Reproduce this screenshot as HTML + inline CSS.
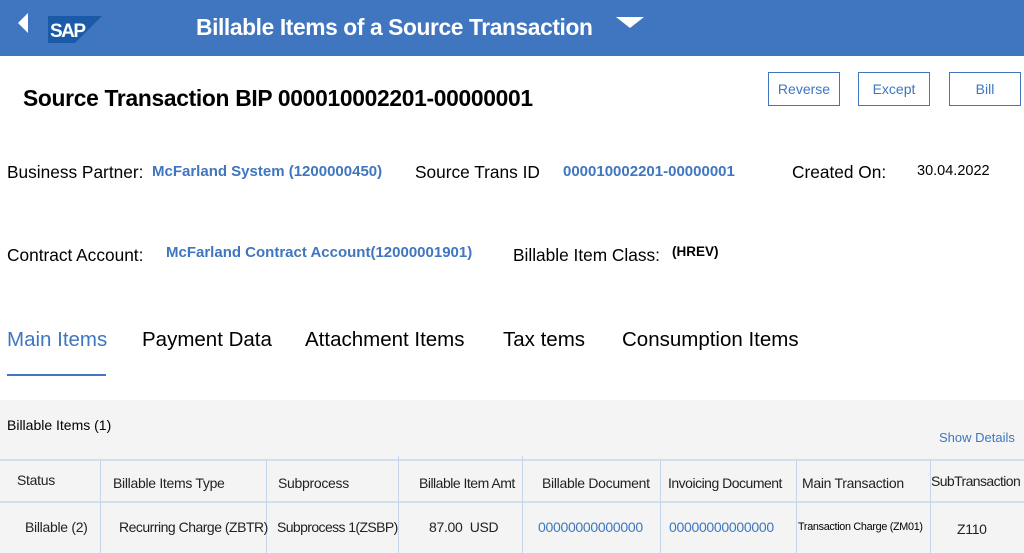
<!DOCTYPE html>
<html><head><style>
body{margin:0;width:1024px;height:553px;overflow:hidden;background:#fff;font-family:"Liberation Sans",sans-serif;position:relative}
.a{position:absolute;white-space:nowrap}
.hdr{position:absolute;left:0;top:0;width:1024px;height:56px;background:#3f76bf}
.btn{position:absolute;top:72px;height:34px;border:1px solid #3f76bf;color:#3f76bf;font-size:14px;text-align:center;line-height:33px;box-sizing:border-box}
.lnk{color:#3f76bf;font-weight:bold}
.gray{position:absolute;left:0;top:400px;width:1024px;height:153px;background:#f4f4f4}
.vl{position:absolute;width:1px;background:#c5d6ea}
.hl{position:absolute;height:2px;background:#d2dfee}
.th{font-size:14px;color:#222;letter-spacing:-0.3px}
</style></head><body>
<div class="hdr"></div>
<svg class="a" style="left:18px;top:13px" width="12" height="20"><polygon points="10,0 10,20 0,10" fill="#fff"/></svg>
<svg class="a" style="left:48px;top:16px" width="54" height="27"><polygon points="0,0 54,0 27,27 0,27" fill="#1a5aa8"/><text x="2" y="21" font-family="Liberation Sans" font-weight="bold" font-size="19" fill="#fff" letter-spacing="-1.5">SAP</text></svg>
<div class="a" style="left:196px;top:14px;color:#fff;font-size:22.8px;font-weight:bold;letter-spacing:-0.4px">Billable Items of a Source Transaction</div>
<svg class="a" style="left:616px;top:17px" width="28" height="12"><polygon points="0,0 28,0 14,11" fill="#fff"/></svg>
<div class="a" style="left:23px;top:85px;font-size:22.8px;font-weight:bold;letter-spacing:-0.3px">Source Transaction BIP 000010002201-00000001</div>
<div class="btn" style="left:768px;width:72px">Reverse</div>
<div class="btn" style="left:858px;width:72px">Except</div>
<div class="btn" style="left:949px;width:72px">Bill</div>
<div class="a" style="left:7px;top:162px;font-size:17.3px">Business Partner:</div>
<div class="a lnk" style="left:152px;top:163px;font-size:15px">McFarland System (1200000450)</div>
<div class="a" style="left:415px;top:162px;font-size:17.3px">Source Trans ID</div>
<div class="a lnk" style="left:563px;top:163px;font-size:15px">000010002201-00000001</div>
<div class="a" style="left:792px;top:162px;font-size:17.3px">Created On:</div>
<div class="a" style="left:917px;top:163px;font-size:14.5px">30.04.2022</div>
<div class="a" style="left:7px;top:245px;font-size:17.3px">Contract Account:</div>
<div class="a lnk" style="left:166px;top:244px;font-size:15px">McFarland Contract Account(12000001901)</div>
<div class="a" style="left:513px;top:245px;font-size:17.3px">Billable Item Class:</div>
<div class="a" style="left:672px;top:244px;font-size:13.5px;font-weight:bold">(HREV)</div>
<div class="a" style="left:7px;top:328px;font-size:20.5px;color:#3f76bf">Main Items</div>
<div class="a" style="left:7px;top:374px;width:99px;height:2px;background:#3f76bf"></div>
<div class="a" style="left:142px;top:328px;font-size:20.5px">Payment Data</div>
<div class="a" style="left:305px;top:328px;font-size:20.5px">Attachment Items</div>
<div class="a" style="left:503px;top:328px;font-size:20.5px">Tax tems</div>
<div class="a" style="left:622px;top:328px;font-size:20.5px">Consumption Items</div>
<div class="gray"></div>
<div class="a" style="left:7px;top:417px;font-size:14px">Billable Items (1)</div>
<div class="a" style="left:939px;top:430px;font-size:13px;color:#3f76bf">Show Details</div>
<div class="hl" style="left:0;top:459px;width:1024px"></div>
<div class="hl" style="left:0;top:501px;width:1024px"></div>
<div class="vl" style="left:100px;top:460px;height:93px"></div>
<div class="vl" style="left:266px;top:460px;height:93px"></div>
<div class="vl" style="left:398px;top:456px;height:97px"></div>
<div class="vl" style="left:522px;top:456px;height:97px"></div>
<div class="vl" style="left:660px;top:460px;height:93px"></div>
<div class="vl" style="left:796px;top:460px;height:93px"></div>
<div class="vl" style="left:930px;top:460px;height:93px"></div>
<div class="a th" style="left:17px;top:472px">Status</div>
<div class="a th" style="left:113px;top:475px">Billable Items Type</div>
<div class="a th" style="left:278px;top:475px">Subprocess</div>
<div class="a th" style="left:419px;top:475px;letter-spacing:-0.5px">Billable Item Amt</div>
<div class="a th" style="left:542px;top:475px">Billable Document</div>
<div class="a th" style="left:668px;top:475px;letter-spacing:-0.5px">Invoicing Document</div>
<div class="a th" style="left:802px;top:475px">Main Transaction</div>
<div class="a th" style="left:931px;top:473px;letter-spacing:-0.6px">SubTransaction</div>
<div class="a th" style="left:25px;top:519px">Billable (2)</div>
<div class="a th" style="left:119px;top:519px;letter-spacing:-0.5px">Recurring Charge (ZBTR)</div>
<div class="a th" style="left:277px;top:519px;letter-spacing:-0.6px">Subprocess 1(ZSBP)</div>
<div class="a th" style="left:429px;top:519px">87.00&nbsp;&nbsp;USD</div>
<div class="a th" style="left:538px;top:519px;color:#3f76bf">00000000000000</div>
<div class="a th" style="left:669px;top:519px;color:#3f76bf">00000000000000</div>
<div class="a" style="left:798px;top:521px;font-size:10.8px;letter-spacing:-0.3px">Transaction Charge (ZM01)</div>
<div class="a th" style="left:957px;top:521px">Z110</div>
</body></html>
